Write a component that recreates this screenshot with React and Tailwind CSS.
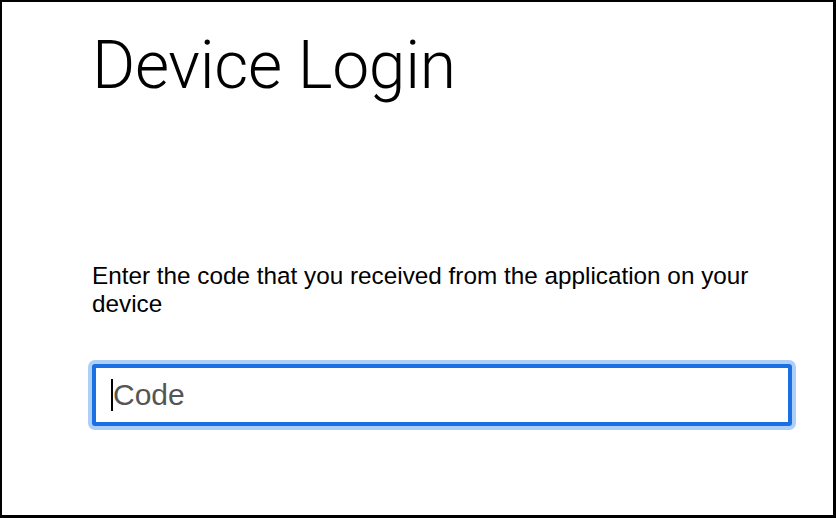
import React from 'react';

export default function App() {
    return (
        <div className="w-[836px] h-[518px] bg-white border-black border-l-2 border-t-2 border-r-[3px] border-b-[3px] pl-[90px] overflow-hidden">
            <h1
                className="pt-[31px] text-[66px] leading-none font-light text-black tracking-[-0.3px]"
                style={{ fontFamily: 'Roboto, sans-serif' }}
            >
                Device Login
            </h1>

            <p
                className="mt-[163px] text-[24.3px] leading-[28px] text-black w-[690px]"
                style={{ fontFamily: '"Liberation Sans", Arial, sans-serif' }}
            >
                Enter the code that you received from the application on your device
            </p>

            {/* Focused code input */}
            <div className="mt-[46px] w-[700px] h-[62px] border-4 border-[#1a6fe2] rounded-[3px] shadow-[0_0_0_4px_#aecff7] bg-white flex items-center pl-[15px]">
                <span className="w-[2px] h-[32px] bg-black" />
                <span
                    className="text-[30px] leading-none text-[#555555]"
                    style={{ fontFamily: '"Liberation Sans", Arial, sans-serif' }}
                >
                    Code
                </span>
            </div>
        </div>
    );
}
